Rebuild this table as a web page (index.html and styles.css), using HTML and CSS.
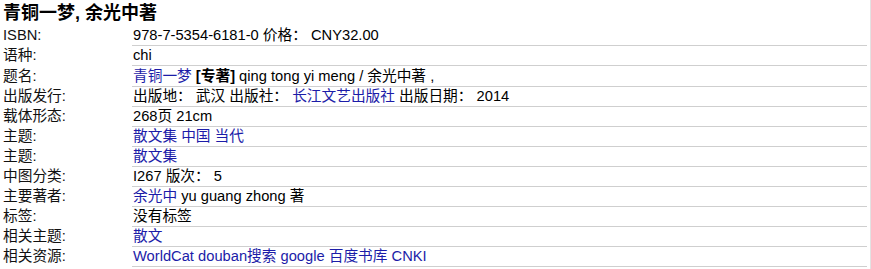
FILE: index.html
```html
<!DOCTYPE html>
<html lang="zh-CN">
<head>
<meta charset="utf-8">
<title>青铜一梦, 余光中著</title>
<link rel="stylesheet" href="styles.css">
</head>
<body>
<div class="page">
  <h1 class="title">青铜一梦, 余光中著</h1>
  <table class="record">
    <tr><td class="label">ISBN:</td><td class="value">978-7-5354-6181-0 价格： CNY32.00</td></tr>
    <tr><td class="label">语种:</td><td class="value">chi</td></tr>
    <tr class="tall"><td class="label">题名:</td><td class="value"><a href="#">青铜一梦</a> <b>[专著]</b> qing tong yi meng / 余光中著 ,</td></tr>
    <tr><td class="label">出版发行:</td><td class="value">出版地： 武汉 出版社： <a href="#">长江文艺出版社</a> 出版日期： 2014</td></tr>
    <tr><td class="label">载体形态:</td><td class="value">268页 21cm</td></tr>
    <tr><td class="label">主题:</td><td class="value"><a href="#">散文集 中国 当代</a></td></tr>
    <tr><td class="label">主题:</td><td class="value"><a href="#">散文集</a></td></tr>
    <tr><td class="label">中图分类:</td><td class="value">I267 版次： 5</td></tr>
    <tr><td class="label">主要著者:</td><td class="value"><a href="#">余光中</a> yu guang zhong 著</td></tr>
    <tr><td class="label">标签:</td><td class="value">没有标签</td></tr>
    <tr><td class="label">相关主题:</td><td class="value"><a href="#">散文</a></td></tr>
    <tr><td class="label">相关资源:</td><td class="value"><a href="#">WorldCat</a> <a href="#">douban搜索</a> <a href="#">google</a> <a href="#">百度书库</a> <a href="#">CNKI</a></td></tr>
  </table>
</div>
</body>
</html>
```
FILE: styles.css
```css
html, body {
  margin: 0;
  padding: 0;
  background: #fff;
}
.page {
  width: 870px;
  min-height: 269px;
  border-right: 1px solid #e2e2e2;
  font-family: Arial, "Liberation Sans", "Noto Sans CJK SC", sans-serif;
  font-size: 14.7px;
  color: #000;
}
.title {
  margin: 0;
  padding: 0 3px;
  height: 26px;
  line-height: 26px;
  font-size: 18px;
  font-weight: bold;
}
.record {
  border-collapse: collapse;
  width: 867px;
}
.record td {
  padding: 0;
  height: 19px;
  line-height: 19px;
  vertical-align: middle;
  white-space: nowrap;
}
.record tr.tall td {
  height: 20px;
}
.label {
  width: 129px;
  padding-left: 3px !important;
  color: #111;
}
.value {
  padding-left: 1px !important;
  border-bottom: 1px solid #cfcfcf;
}
.value a {
  color: #1c1ca8;
  text-decoration: none;
}
.value b {
  font-weight: bold;
}
```
